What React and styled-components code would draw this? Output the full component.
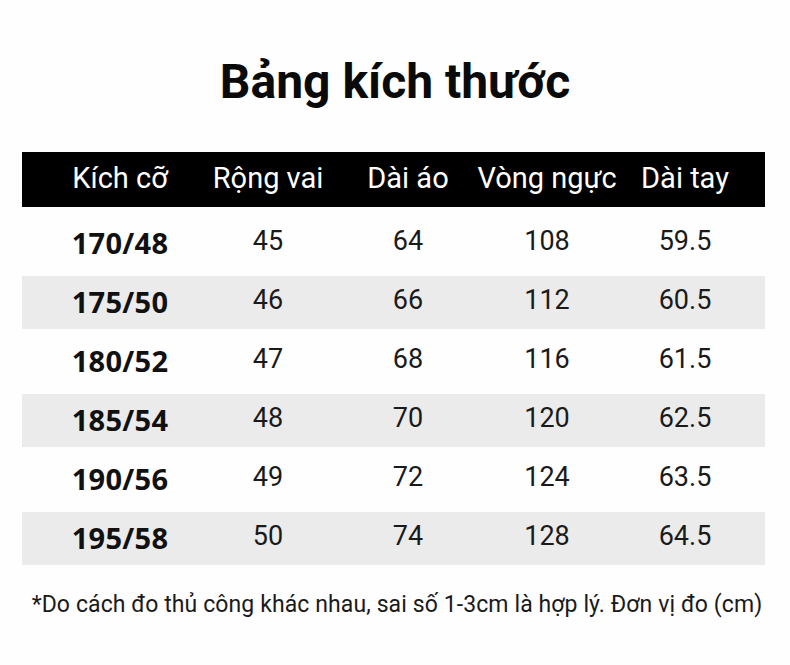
import React from 'react'
import styled, { createGlobalStyle } from 'styled-components'

const GlobalStyle = createGlobalStyle`
  html, body {
    margin: 0;
    padding: 0;
    background: #fefefe;
  }
  body {
    font-family: Roboto, "Noto Sans", sans-serif;
    color: #111;
  }
`

// column widths picked so the cell centres line up with the picture
const columns = '178px 118px 162px 116px 1fr'

const Page = styled.div`
  width: 790px;
  height: 665px;
  display: flex;
  flex-direction: column;
  align-items: center;
  padding-top: 50px;
  box-sizing: border-box;
`

const Title = styled.h1`
  margin: 0;
  font-family: Roboto, sans-serif;
  font-weight: 700;
  font-size: 48px;
  line-height: 64px;
  color: #0a0a0a;
`

const Table = styled.div`
  margin-top: 38px;
  margin-right: 3px;
  width: 743px;
  display: flex;
  flex-direction: column;
`

const HeadRow = styled.div`
  display: grid;
  grid-template-columns: ${columns};
  height: 55px;
  padding-left: 9px;
  box-sizing: border-box;
  align-items: center;
  background: #000;
  color: #fff;
  margin-bottom: 10px;
`

const HeadCell = styled.div`
  display: flex;
  justify-content: center;
  white-space: nowrap;
  font-size: 29px;
  font-weight: 400;
  padding-bottom: 4px;
`

const Body = styled.div`
  display: flex;
  flex-direction: column;
  gap: 6px;
`

const Row = styled.div`
  display: grid;
  grid-template-columns: ${columns};
  height: 53px;
  align-items: center;
  padding: 0 0 5px 9px;
  box-sizing: border-box;
  background: ${({ shaded }) => (shaded ? '#ebebeb' : 'transparent')};
`

const SizeCell = styled.div`
  display: flex;
  justify-content: center;
  white-space: nowrap;
  font-family: "Open Sans", sans-serif;
  font-weight: 700;
  font-size: 29px;
  letter-spacing: 0.3px;
  color: #111;
  margin-top: 3px;
`

const Cell = styled.div`
  display: flex;
  justify-content: center;
  font-size: 27px;
  color: #1a1a1a;
`

const Note = styled.p`
  margin: 26px 0 0;
  font-size: 23px;
  letter-spacing: 0.1px;
  color: #1a1a1a;
  margin-left: 4px;
`

const headers = ['Kích cỡ', 'Rộng vai', 'Dài áo', 'Vòng ngực', 'Dài tay']

const rows = [
  ['170/48', 45, 64, 108, '59.5'],
  ['175/50', 46, 66, 112, '60.5'],
  ['180/52', 47, 68, 116, '61.5'],
  ['185/54', 48, 70, 120, '62.5'],
  ['190/56', 49, 72, 124, '63.5'],
  ['195/58', 50, 74, 128, '64.5'],
]

const App = () => (
  <>
    <GlobalStyle />
    <Page>
      <Title>Bảng kích thước</Title>
      <Table>
        <HeadRow>
          {headers.map((h) => (
            <HeadCell key={h}>{h}</HeadCell>
          ))}
        </HeadRow>
        <Body>
          {rows.map(([size, ...vals], i) => (
            <Row key={size} shaded={i % 2 === 1}>
              <SizeCell>{size}</SizeCell>
              {vals.map((v, j) => (
                <Cell key={j}>{v}</Cell>
              ))}
            </Row>
          ))}
        </Body>
      </Table>
      <Note>
        *Do cách đo thủ công khác nhau, sai số 1-3cm là hợp lý. Đơn vị đo (cm)
      </Note>
    </Page>
  </>
)

export default App
